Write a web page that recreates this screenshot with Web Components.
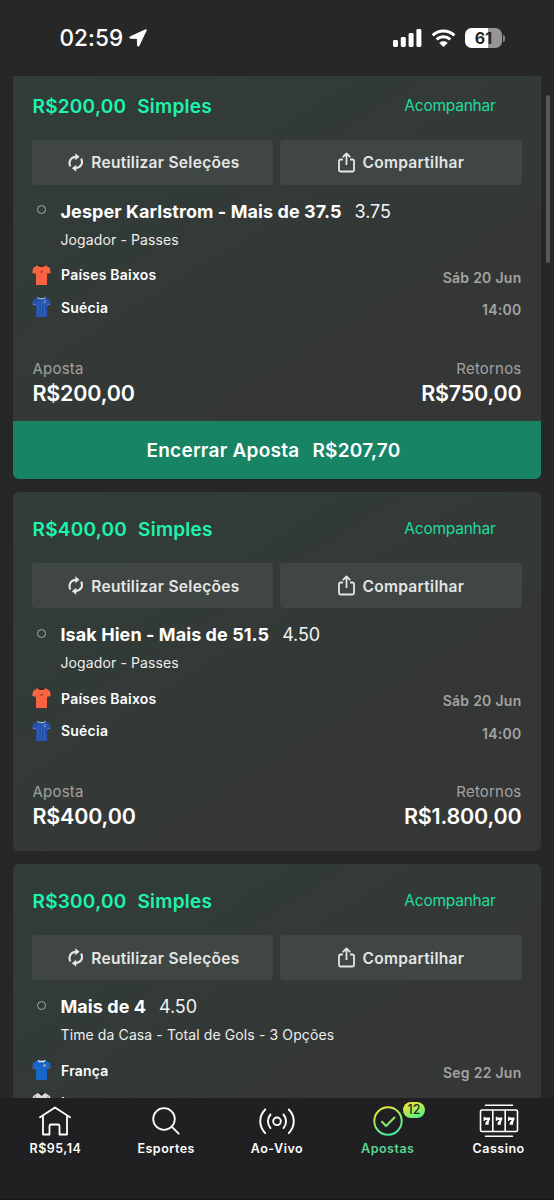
<!DOCTYPE html>
<html lang="pt-BR">
<head>
<meta charset="utf-8">
<title>Apostas</title>
<style>
html,body{margin:0;height:100%;background:#272727;overflow:hidden}
body{font-family:Inter,"Liberation Sans",sans-serif;color:#fff}
</style>
</head>
<body>
<bets-app></bets-app>
<script>
const define = (name, html) => {
  const t = document.createElement('template');
  t.innerHTML = html;
  customElements.define(name, class extends HTMLElement {
    constructor() {
      super();
      this.attachShadow({ mode: 'open' }).appendChild(t.content.cloneNode(true));
    }
  });
};

define('status-bar', `
<style>
:host{display:flex;height:76px;box-sizing:border-box;padding:0 49px 0 59.500px;align-items:center;justify-content:space-between}
.l,.r{display:flex;align-items:center}
.l{font-size:22.500px;font-weight:500;letter-spacing:.1px;line-height:28px}
.l svg{margin-left:5.500px}
.r svg{display:block}
.bat{display:flex;align-items:center;margin-left:9px}
.b{width:37px;height:20px;border-radius:6.500px;background:linear-gradient(90deg,#fff 61%,#959595 61%);color:#252525;font-weight:700;font-size:16px;line-height:20px;text-align:center;letter-spacing:.2px}
.n{width:2px;height:7px;margin-left:1px;border-radius:0 2px 2px 0;background:#858585}
</style>
<div class="l"><span>02:59</span><svg width="18" height="18" viewBox="0 0 19 19"><path d="M17.500.8 1.300 8.200c-.9.500-.6 1.500.2 1.500l7.300.2.2 7.400c0 1 1.100 1.200 1.500.3L18.200 1.500c.3-.7-.1-1-.7-.7z" fill="#fff" stroke="#fff" stroke-width="1" stroke-linejoin="round"/></svg></div>
<div class="r">
<svg width="29" height="18" viewBox="0 0 29 18" fill="#fff"><rect x="0" y="11" width="5" height="7" rx="1.400"/><rect x="7.800" y="8" width="5" height="10" rx="1.400"/><rect x="15.600" y="4" width="5" height="14" rx="1.400"/><rect x="23.400" y="0" width="5" height="18" rx="1.400"/></svg>
<svg style="margin-left:9px" width="25" height="18" viewBox="0 0 25 18"><path d="M1.600 6.300C7.700.4 17.300.4 23.400 6.300M5.700 10.500c3.900-3.700 9.700-3.700 13.600 0" fill="none" stroke="#fff" stroke-width="3"/><path d="M12.500 17.800 8.600 13.900c2.200-2 5.600-2 7.800 0z" fill="#fff" stroke="#fff" stroke-width=".6" stroke-linejoin="round"/></svg>
<div class="bat"><div class="b">61</div><div class="n"></div></div>
</div>`);

define('bet-action', `
<style>
:host{display:flex;align-items:center;justify-content:center;height:45px;border-radius:4px;background:#404644;color:#e4e6e5;font-size:15.500px;font-weight:600;letter-spacing:.3px;gap:8px}
span{position:relative;top:.6px}
::slotted(svg){display:block;flex:none}
</style><slot name="icon"></slot><span><slot></slot></span>`);

define('selection-line', `
<style>
:host{display:grid;grid-template-columns:28px 1fr}
.dot{width:7px;height:7px;border:1.500px solid #a4aaa7;border-radius:50%;margin:9.700px 0 0 4.500px}
.t{display:flex;gap:13px;height:30px;line-height:31px;font-size:18px;font-weight:700;letter-spacing:.07px;white-space:nowrap}
.o{font-weight:400;letter-spacing:-.1px;color:#f2f3f3}
.m{font-size:14px;line-height:20px;margin-top:4px;letter-spacing:.11px;color:#eceeed}
</style>
<div class="dot"></div><div><div class="t"><slot></slot><span class="o"><slot name="odds"></slot></span></div><div class="m"><slot name="market"></slot></div></div>`);

define('match-teams', `
<style>
:host{display:flex;justify-content:space-between}
.names{display:grid;grid-auto-rows:32.500px}
.when{display:grid;grid-auto-rows:32.500px;margin-top:3px;text-align:right;font-size:14px;font-weight:600;line-height:32px;letter-spacing:.27px;color:#a2a4a3}
</style>
<div class="names"><slot></slot></div><div class="when"><slot name="day"></slot><slot name="hour"></slot></div>`);

const SHIRTS = {
  nl: `<path d="M6 1 1 4 .3 9l3.700 1V21h11V10l3.700-1L18 4l-5-3c-2 1.400-5 1.400-7 0z" fill="#fa6442"/><path d="M6.500.7c1.700.9 4.300.9 6 0L13 2c-2 1.300-5 1.300-7 0z" fill="#2a1c1b"/><path d="m9 7.500 2-1.500-.7 2.200L8.500 9z" fill="#702b20"/><path d="M4 8.500V10M15 8.500V10" stroke="#c64b31" stroke-width=".7"/>`,
  se: `<path d="M6 1 1 4 .3 9l3.700 1V21h11V10l3.700-1L18 4l-5-3c-2 1.400-5 1.400-7 0z" fill="#2551ad"/><path d="M5.500 1.300C7 3.300 12 3.300 13.500 1.300" stroke="#d4d6b0" fill="none"/><path d="M6.500 5v16M9.500 5v16M12.500 5v16" stroke="#3968bd" stroke-width=".7"/><circle cx="13" cy="5.700" r="1.300" fill="none" stroke="#8da9d8" stroke-width=".6"/><path d="m.7 7.800 3.300 1.200M18.300 7.800 15 9" stroke="#7794c6" stroke-width=".7"/>`,
  fr: `<path d="M6 1 1 4 .3 9l3.700 1V21h11V10l3.700-1L18 4l-5-3c-2 1.400-5 1.400-7 0z" fill="#1766cb"/><path d="M6 1.200 8 3l1.500-1L11 3l2-1.800" stroke="#e6edee" stroke-width="1.300" fill="none"/><circle cx="12.500" cy="6.500" r="1.300" fill="#c5b193"/><path d="m.6 9 3.400 1M18.400 9 15 10" stroke="#a55162" stroke-width=".7"/>`,
  iq: `<path d="M6 1 1 4 .3 9l3.700 1V21h11V10l3.700-1L18 4l-5-3c-2 1.400-5 1.400-7 0z" fill="#ded9da"/><path d="M6 .8h7L9.700 4z" fill="#242424"/><path d="m2.500 3.500 1.700 4m12.300-4-1.700 4" stroke="#777" stroke-width=".8"/>`
};
customElements.define('team-row', class extends HTMLElement {
  connectedCallback() {
    this.attachShadow({ mode: 'open' }).innerHTML = `
<style>
:host{display:flex;align-items:center;height:32px;font-size:14px;font-weight:600;letter-spacing:.22px}
svg{display:block;width:19px;height:22px;margin:0 10px 0 -.500px}
</style><svg viewBox="0 0 19 22">${SHIRTS[this.getAttribute('kit')]}</svg><slot></slot>`;
  }
});

define('bet-card', `
<style>
:host{display:block;border-radius:6px;overflow:hidden;background:linear-gradient(148deg,#303d38 0%,#333a37 40%,#353636 75%,#363636 100%);flex:none}
.body{padding:0 19.500px 0}
header{display:flex;justify-content:space-between;align-items:center;height:71px;padding-top:4px;box-sizing:border-box;color:#1cf5ac;font-size:19px;font-weight:600;letter-spacing:.25px}
.h{display:flex;gap:11px}
.f{font-size:15.500px;font-weight:400;letter-spacing:-.25px;color:#20dda0;margin:-2px 26px 0 0}
.acts{display:grid;grid-template-columns:1fr 1fr;gap:7px;margin-left:-.5px}
bet-action:first-child{padding-left:2px}
selection-line{margin-top:11px}
match-teams{margin-top:9px}
.sum{display:flex;justify-content:space-between;margin-top:31px;height:63.500px}
:host([live]) .sum{display:none}
.sum div:last-child{text-align:right}
.k{font-size:15px;line-height:22px;color:#a0a2a1;letter-spacing:.2px}
.v{font-size:21.500px;line-height:27px;font-weight:600;letter-spacing:-.2px}
</style>
<div class="body">
<header><div class="h"><span><slot name="stake"></slot></span><span>Simples</span></div><span class="f">Acompanhar</span></header>
<div class="acts">
<bet-action><svg slot="icon" width="15.500" height="19" viewBox="0 0 16 19"><g fill="none" stroke="#e4e6e5" stroke-width="2.200"><path d="M2.500 13.500C.2 9.300 2.200 3.800 8.500 3.700"/><path d="M13.500 5.500c2.300 4.200.3 9.700-6 9.800"/></g><path d="M7.500 0v7.200l4.500-3.600zM8.500 11.800V19L4 15.400z" fill="#e4e6e5"/></svg>Reutilizar Seleções</bet-action>
<bet-action><svg slot="icon" width="17" height="21" viewBox="0 0 17 21" fill="none" stroke="#e4e6e5" stroke-width="1.800" stroke-linejoin="round"><path d="M5 7.500H2.500A1.500 1.500 0 0 0 1 9v9a1.500 1.500 0 0 0 1.500 1.500h12A1.500 1.500 0 0 0 16 18V9a1.500 1.500 0 0 0-1.500-1.500H12M8.500 13V1.700M4.800 5.200l3.700-3.700 3.700 3.700"/></svg>Compartilhar</bet-action>
</div>
<selection-line><slot name="pick"></slot><slot name="odds" slot="odds"></slot><slot name="market" slot="market"></slot></selection-line>
<match-teams><slot name="team"></slot><slot name="day" slot="day"></slot><slot name="hour" slot="hour"></slot></match-teams>
<div class="sum"><div><div class="k">Aposta</div><div class="v"><slot name="total"></slot></div></div><div><div class="k">Retornos</div><div class="v"><slot name="returns"></slot></div></div></div>
</div>
<slot name="cashout"></slot>`);

define('cash-out', `
<style>:host{display:flex;align-items:center;justify-content:center;gap:13px;height:58px;box-sizing:border-box;padding:1px 7px 0 0;background:#178463;font-size:19px;font-weight:600;letter-spacing:.25px}</style>
<span>Encerrar Aposta</span><span><slot></slot></span>`);

define('nav-item', `
<style>
:host{display:flex;flex-direction:column;align-items:center;position:relative;padding-top:6px;font-size:12.500px;font-weight:600;letter-spacing:.5px;color:#fff}
.i{height:34px;display:flex;align-items:center}
.t{line-height:20px;margin-top:1px;white-space:nowrap}
::slotted(svg){display:block}
::slotted([slot=badge]){position:absolute;left:70.500px;top:4px;width:22px;height:16px;border-radius:8px;background:linear-gradient(160deg,#f0e238 10%,#9cef5a 55%,#42f29c);color:#20302a;font-size:12.500px;font-weight:500;line-height:16px;text-align:center;letter-spacing:0}
</style><div class="i"><slot name="icon"></slot></div><div class="t"><slot></slot></div><slot name="badge"></slot>`);

define('bottom-nav', `
<style>
:host{display:grid;grid-template-columns:repeat(5,1fr);height:102px;background:#202022;border-bottom:1px solid #171719;box-sizing:border-box}
.on{color:#5bd690}
</style>
<nav-item><svg slot="icon" width="32" height="30" viewBox="0 0 32 30" fill="none" stroke="#fff" stroke-width="1.800" stroke-linejoin="round" stroke-linecap="round"><path d="M1 11.200 16 1.500l15 9.700M4 9.500V28.500h6.500V20a1.500 1.500 0 0 1 1.500-1.500h7a1.500 1.500 0 0 1 1.500 1.500v8.500H28V9.500"/></svg>R$95,14</nav-item>
<nav-item><svg slot="icon" width="28" height="28" viewBox="0 0 28 28" fill="none" stroke="#fff" stroke-width="1.800" stroke-linecap="round"><circle cx="12" cy="12" r="10.800"/><path d="m19.700 19.700 7 7"/></svg>Esportes</nav-item>
<nav-item><svg slot="icon" width="36" height="28" viewBox="0 0 36 28" fill="none" stroke="#fff" stroke-width="1.900" stroke-linecap="round"><circle cx="18" cy="14.300" r="3.800"/><path d="M11.500 7.500c-3.400 3.800-3.400 9.800 0 13.600M24.500 7.500c3.400 3.800 3.400 9.800 0 13.600M6.200 2.500C-.4 9.500-.4 19.100 6.200 26.100M29.800 2.500c6.600 7 6.600 16.600 0 23.600"/></svg>Ao-Vivo</nav-item>
<nav-item class="on"><svg slot="icon" width="30" height="30" viewBox="0 0 30 30" fill="none" stroke="url(#g)" stroke-width="2" stroke-linecap="round" stroke-linejoin="round"><defs><linearGradient id="g" gradientUnits="userSpaceOnUse" x1="9" y1="0" x2="20" y2="30"><stop stop-color="#efe438"/><stop offset=".5" stop-color="#8deb68"/><stop offset="1" stop-color="#39edac"/></linearGradient></defs><circle cx="15" cy="15" r="13.700"/><path d="m9 15.800 4 4.200 8.500-8.500"/></svg>Apostas<span slot="badge">12</span></nav-item>
<nav-item><svg slot="icon" width="40" height="34" viewBox="0 0 40 34" fill="none" stroke="#fff" stroke-width="1.600"><path d="M6.500 1.300h27M6.500 32.200h27" stroke-linecap="round"/><rect x="1.500" y="6" width="37" height="21.500" rx="1.500"/><path d="M13.800 6v21.500M26.200 6v21.500"/><g fill="#fff" stroke="none"><path id="s" d="M4.600 12.800h1l.5.700h5v1.800c-1 1.600-1.500 3-1.500 5.500H6.200c.1-2.200.8-3.400 2.300-4.700H6.100l-.6 1h-.9z"/><use href="#s" x="12.200"/><use href="#s" x="24.400"/></g></svg>Cassino</nav-item>`);

define('bets-app', `
<style>
:host{display:flex;flex-direction:column;height:1200px;width:554px;overflow:hidden;position:relative}
status-bar,bottom-nav{flex:none}
main{flex:1;min-height:0;overflow:hidden;padding:0 13px}
.list{display:flex;flex-direction:column;gap:12.800px;margin-top:-7.300px}
.tall{padding-bottom:6.900px}
.thumb{position:absolute;right:4px;top:95px;width:4px;height:168px;border-radius:2px;background:#595959}
</style>
<status-bar></status-bar>
<main><div class="list">
<bet-card><span slot="stake">R$200,00</span><span slot="pick">Jesper Karlstrom - Mais de 37.5</span><span slot="odds">3.75</span><span slot="market">Jogador - Passes</span><team-row slot="team" kit="nl">Países Baixos</team-row><team-row slot="team" kit="se">Suécia</team-row><span slot="day">Sáb 20 Jun</span><span slot="hour">14:00</span><span slot="total">R$200,00</span><span slot="returns">R$750,00</span><cash-out slot="cashout">R$207,70</cash-out></bet-card>
<bet-card class="tall"><span slot="stake">R$400,00</span><span slot="pick">Isak Hien - Mais de 51.5</span><span slot="odds">4.50</span><span slot="market">Jogador - Passes</span><team-row slot="team" kit="nl">Países Baixos</team-row><team-row slot="team" kit="se">Suécia</team-row><span slot="day">Sáb 20 Jun</span><span slot="hour">14:00</span><span slot="total">R$400,00</span><span slot="returns">R$1.800,00</span></bet-card>
<bet-card class="tall" live><span slot="stake">R$300,00</span><span slot="pick">Mais de 4</span><span slot="odds">4.50</span><span slot="market">Time da Casa - Total de Gols - 3 Opções</span><team-row slot="team" kit="fr">França</team-row><team-row slot="team" kit="iq">Iraque</team-row><span slot="day">Seg 22 Jun</span></bet-card>
</div></main>
<bottom-nav></bottom-nav>
<div class="thumb"></div>`);
</script>
</body>
</html>
